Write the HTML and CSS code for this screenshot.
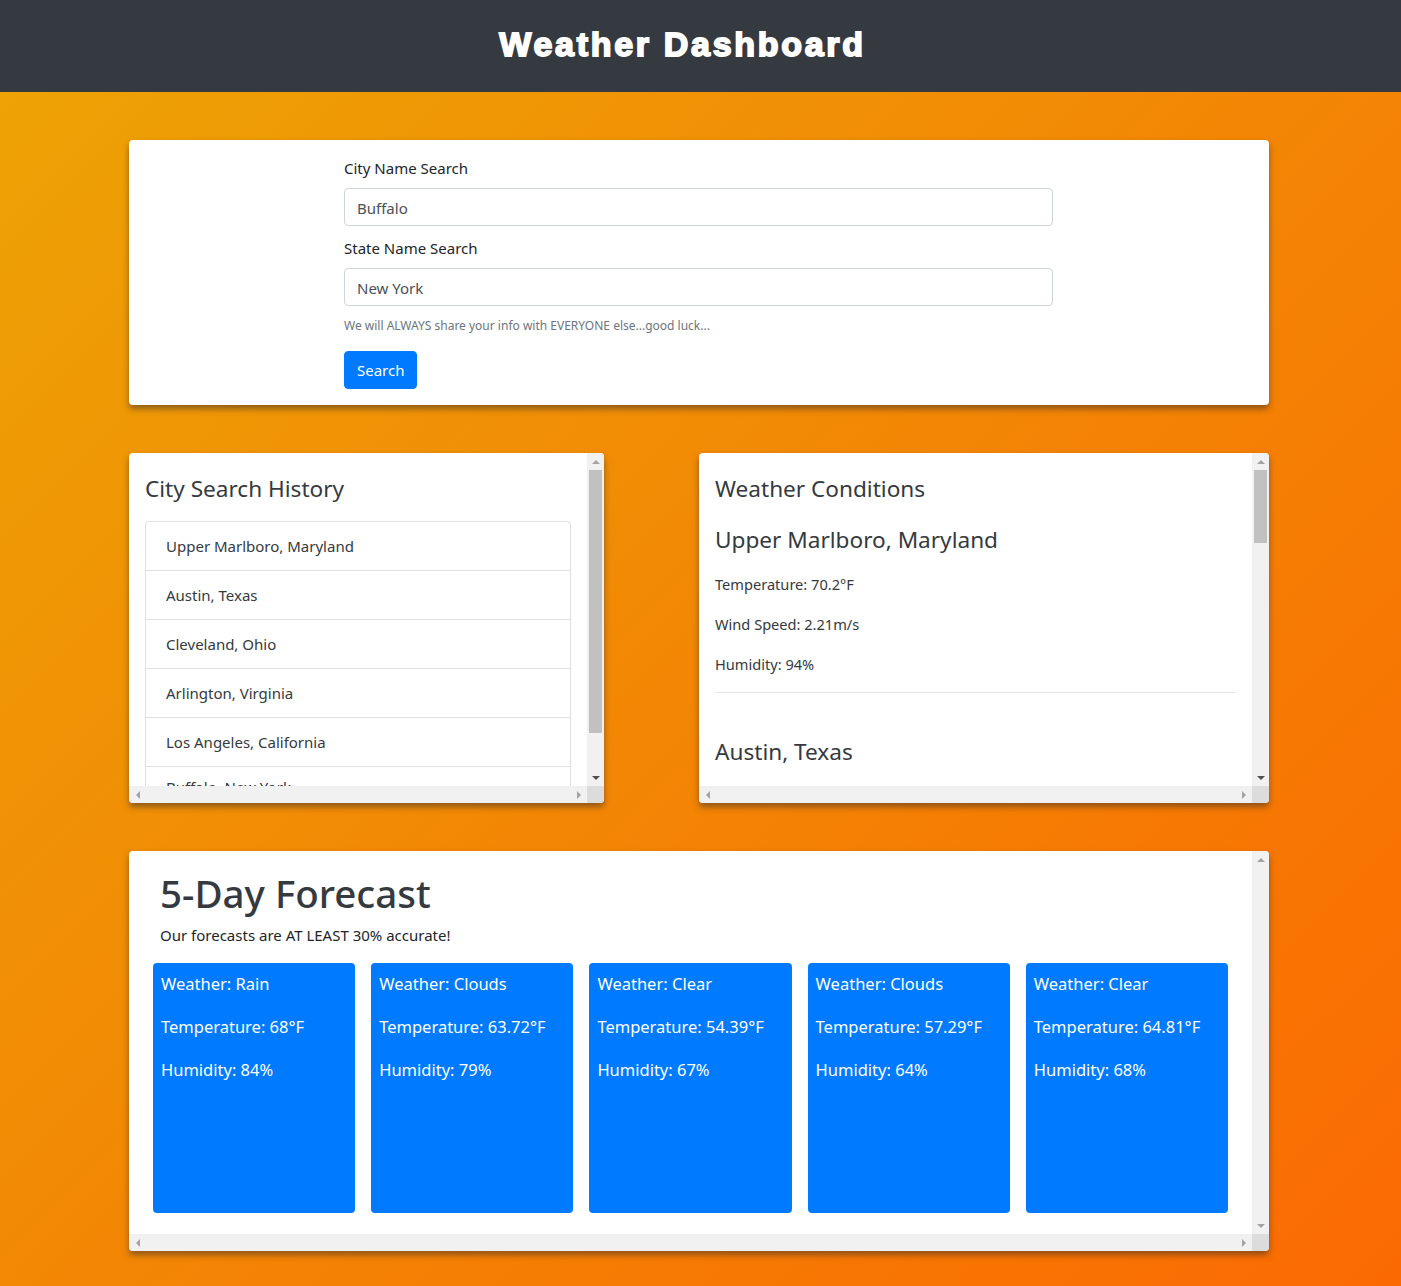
FILE: index.html
```html
<!DOCTYPE html>
<html lang="en">
<head>
<meta charset="utf-8">
<title>Weather Dashboard</title>
<link rel="stylesheet" href="styles.css">
</head>
<body>
<header class="topbar">
  <h1 class="topbar-title">Weather Dashboard</h1>
</header>
<main class="page">
  <section class="card search-card">
    <form class="search-form">
      <div class="form-group">
        <label class="form-label" for="city">City Name Search</label>
        <input class="form-input" id="city" type="text" value="Buffalo">
      </div>
      <div class="form-group">
        <label class="form-label" for="state">State Name Search</label>
        <input class="form-input" id="state" type="text" value="New York">
      </div>
      <small class="form-help">We will ALWAYS share your info with EVERYONE else...good luck...</small>
      <button class="btn-primary" type="button">Search</button>
    </form>
  </section>

  <div class="middle-row">
    <section class="card scroll-card history-card">
      <div class="viewport history-view">
        <h2 class="card-title">City Search History</h2>
        <ul class="list-group">
          <li class="list-item">Upper Marlboro, Maryland</li>
          <li class="list-item">Austin, Texas</li>
          <li class="list-item">Cleveland, Ohio</li>
          <li class="list-item">Arlington, Virginia</li>
          <li class="list-item">Los Angeles, California</li>
          <li class="list-item list-item-last">Buffalo, New York</li>
        </ul>
      </div>
      <div class="vbar">
        <span class="btn-box"><span class="tri tri-up"></span></span>
        <div class="vtrack"><div class="vthumb thumb-history"></div></div>
        <span class="btn-box"><span class="tri tri-down dark"></span></span>
      </div>
      <div class="hbar">
        <span class="btn-box"><span class="tri tri-left"></span></span>
        <span class="btn-box"><span class="tri tri-right"></span></span>
      </div>
      <div class="corner"></div>
    </section>

    <section class="card scroll-card conditions-card">
      <div class="viewport cond-view">
        <h2 class="card-title cond-title">Weather Conditions</h2>
        <div class="condition">
          <h3 class="city-name">Upper Marlboro, Maryland</h3>
          <p class="cond-line">Temperature: 70.2°F</p>
          <p class="cond-line">Wind Speed: 2.21m/s</p>
          <p class="cond-line">Humidity: 94%</p>
          <hr class="divider">
        </div>
        <div class="condition">
          <h3 class="city-name city-spaced">Austin, Texas</h3>
          <p class="cond-line">Temperature: 81.5°F</p>
          <p class="cond-line">Wind Speed: 3.6m/s</p>
          <p class="cond-line">Humidity: 61%</p>
          <hr class="divider">
        </div>
        <div class="condition">
          <h3 class="city-name city-spaced">Cleveland, Ohio</h3>
          <p class="cond-line">Temperature: 60.1°F</p>
          <p class="cond-line">Wind Speed: 4.1m/s</p>
          <p class="cond-line">Humidity: 72%</p>
          <hr class="divider">
        </div>
        <div class="condition">
          <h3 class="city-name city-spaced">Arlington, Virginia</h3>
          <p class="cond-line">Temperature: 68.4°F</p>
          <p class="cond-line">Wind Speed: 2.6m/s</p>
          <p class="cond-line">Humidity: 88%</p>
          <hr class="divider">
        </div>
      </div>
      <div class="vbar">
        <span class="btn-box"><span class="tri tri-up"></span></span>
        <div class="vtrack"><div class="vthumb thumb-cond"></div></div>
        <span class="btn-box"><span class="tri tri-down dark"></span></span>
      </div>
      <div class="hbar">
        <span class="btn-box"><span class="tri tri-left"></span></span>
        <span class="btn-box"><span class="tri tri-right"></span></span>
      </div>
      <div class="corner"></div>
    </section>
  </div>

  <section class="card scroll-card forecast-card">
    <div class="viewport forecast-view">
      <div class="forecast-head">
        <h2 class="forecast-title">5-Day Forecast</h2>
        <p class="forecast-sub">Our forecasts are AT LEAST 30% accurate!</p>
      </div>
      <div class="forecast-grid">
        <div class="day-card">
          <p class="day-line">Weather: Rain</p>
          <p class="day-line">Temperature: 68°F</p>
          <p class="day-line">Humidity: 84%</p>
        </div>
        <div class="day-card">
          <p class="day-line">Weather: Clouds</p>
          <p class="day-line">Temperature: 63.72°F</p>
          <p class="day-line">Humidity: 79%</p>
        </div>
        <div class="day-card">
          <p class="day-line">Weather: Clear</p>
          <p class="day-line">Temperature: 54.39°F</p>
          <p class="day-line">Humidity: 67%</p>
        </div>
        <div class="day-card">
          <p class="day-line">Weather: Clouds</p>
          <p class="day-line">Temperature: 57.29°F</p>
          <p class="day-line">Humidity: 64%</p>
        </div>
        <div class="day-card">
          <p class="day-line">Weather: Clear</p>
          <p class="day-line">Temperature: 64.81°F</p>
          <p class="day-line">Humidity: 68%</p>
        </div>
      </div>
    </div>
    <div class="vbar">
      <span class="btn-box"><span class="tri tri-up"></span></span>
      <div class="vtrack"></div>
      <span class="btn-box"><span class="tri tri-down"></span></span>
    </div>
    <div class="hbar">
      <span class="btn-box"><span class="tri tri-left"></span></span>
      <span class="btn-box"><span class="tri tri-right"></span></span>
    </div>
    <div class="corner"></div>
  </section>
</main>
</body>
</html>
```

FILE: styles.css
```css
* { box-sizing: border-box; }

html, body {
  margin: 0;
  padding: 0;
}

body {
  font-family: "Noto Sans", "Open Sans", sans-serif;
  font-size: 15px;
  line-height: 24px;
  color: #212529;
  min-height: 1286px;
  background: linear-gradient(135deg, #eda405 0%, #f28a05 45%, #fb6a02 100%);
  overflow: hidden;
}

.topbar {
  height: 92px;
  background: #343a40;
  display: flex;
  align-items: center;
  justify-content: center;
  padding-right: 36px;
  padding-bottom: 4px;
}

.topbar-title {
  margin: 0;
  color: #fff;
  font-family: "Liberation Sans", Arial, sans-serif;
  font-weight: 700;
  font-size: 34px;
  letter-spacing: 2.7px;
  -webkit-text-stroke: 1.8px #fff;
}

.page {
  width: 1140px;
  margin: 48px 0 0 129px;
  display: flex;
  flex-direction: column;
  gap: 48px;
}

.card {
  background: #fff;
  border-radius: 4px;
  box-shadow: 0 4px 6px rgba(60, 50, 40, 0.55);
}

/* search card */
.search-card {
  padding: 16px 0 16px 215px;
}

.search-form {
  width: 709px;
  display: flex;
  flex-direction: column;
  align-items: flex-start;
}

.form-group {
  width: 100%;
  margin-bottom: 10px;
}

.form-label {
  display: block;
  margin-bottom: 8px;
  color: #212529;
}

.form-input {
  display: block;
  width: 100%;
  height: 38px;
  padding: 6px 12px 5px;
  border: 1px solid #ced4da;
  border-radius: 4px;
  font-family: inherit;
  font-size: 15px;
  color: #495057;
  background: #fff;
}

.form-help {
  display: block;
  font-size: 12px;
  line-height: 19px;
  color: #6c757d;
  margin-top: 0;
  margin-bottom: 16px;
}

.btn-primary {
  height: 38px;
  padding: 0 12px;
  background: #007bff;
  color: #fff;
  border: 1px solid #007bff;
  border-radius: 4px;
  font-family: inherit;
  font-size: 15px;
}

/* middle row */
.middle-row {
  display: flex;
  justify-content: space-between;
}

.scroll-card {
  display: grid;
  grid-template-columns: minmax(0, 1fr) 17px;
  grid-template-rows: minmax(0, 1fr) 17px;
  overflow: hidden;
}

.viewport {
  overflow: hidden;
}

.history-card {
  width: 475px;
  height: 350px;
}

.conditions-card {
  width: 570px;
  height: 350px;
}

.history-view,
.cond-view {
  padding: 16px 16px 0;
}

.card-title {
  margin: 4px 0 16px;
  font-size: 22.6px;
  line-height: 32px;
  font-weight: 400;
  color: #343a40;
}

.cond-title {
  margin-bottom: 19px;
}

.list-group {
  list-style: none;
  margin: 0;
  padding: 0;
  border: 1px solid rgba(0,0,0,.125);
  border-radius: 4px;
}

.list-item {
  height: 49px;
  padding: 12px 20px;
  border-bottom: 1px solid rgba(0,0,0,.125);
  color: #343a40;
}

.list-item-last {
  padding-top: 8px;
  border-bottom: 0;
}

.city-name {
  margin: 0 0 16px;
  font-size: 22.6px;
  line-height: 32px;
  font-weight: 400;
  color: #343a40;
}

.city-spaced { margin-top: 43px; }

.cond-line {
  margin: 0 0 16px;
  font-size: 14.6px;
  line-height: 24px;
  color: #343a40;
}

.divider {
  margin: 0;
  border: 0;
  border-top: 1px solid rgba(0,0,0,.1);
}

/* forecast */
.forecast-card {
  height: 400px;
}

.forecast-view {
  padding: 18px 24px 0;
}

.forecast-head {
  padding-left: 7px;
}

.forecast-title {
  margin: 0 0 6px;
  font-size: 38.5px;
  line-height: 48px;
  font-weight: 500;
  color: #343a40;
}

.forecast-sub {
  margin: 0 0 16px;
  color: #212529;
}

.forecast-grid {
  display: grid;
  grid-template-columns: repeat(5, 1fr);
  gap: 16px;
}

.day-card {
  height: 250px;
  background: #007bff;
  color: #fff;
  border-radius: 4px;
  padding: 7px 8px;
}

.day-line {
  margin: 0 0 16px;
  font-size: 16.5px;
  line-height: 27px;
}

/* drawn scrollbars */
.vbar {
  background: #f1f1f1;
  display: flex;
  flex-direction: column;
}

.hbar {
  background: #f1f1f1;
  display: flex;
  justify-content: space-between;
}

.corner {
  background: #dcdcdc;
}

.btn-box {
  width: 17px;
  height: 17px;
  flex: none;
  display: flex;
  align-items: center;
  justify-content: center;
}

.vtrack {
  flex: 1;
}

.vthumb {
  margin: 0 2px;
  background: #c1c1c1;
}

.thumb-history { height: 263px; }
.thumb-cond { height: 73px; }

.tri {
  width: 0;
  height: 0;
  display: block;
}

.tri-up {
  border-left: 4px solid transparent;
  border-right: 4px solid transparent;
  border-bottom: 4px solid #a3a3a3;
}

.tri-down {
  border-left: 4px solid transparent;
  border-right: 4px solid transparent;
  border-top: 4px solid #a3a3a3;
}

.tri-down.dark {
  border-top-color: #505050;
}

.tri-left {
  border-top: 4px solid transparent;
  border-bottom: 4px solid transparent;
  border-right: 4px solid #a3a3a3;
}

.tri-right {
  border-top: 4px solid transparent;
  border-bottom: 4px solid transparent;
  border-left: 4px solid #a3a3a3;
}
```
